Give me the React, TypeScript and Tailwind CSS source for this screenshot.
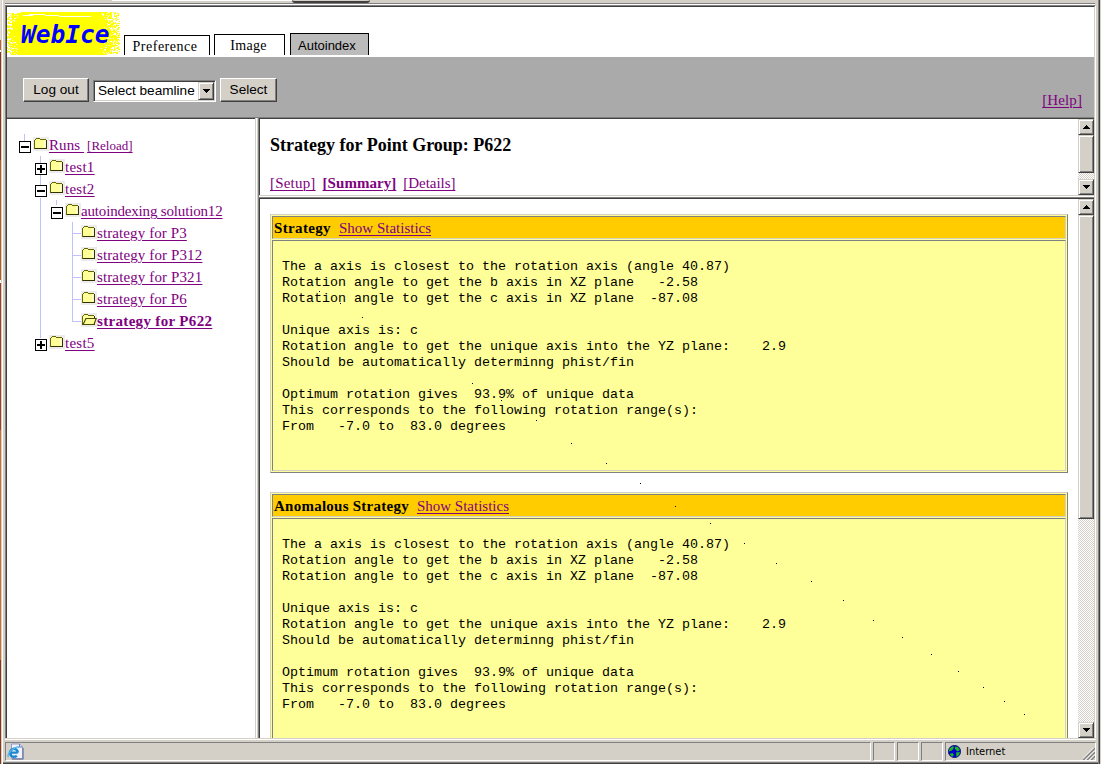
import React from 'react';

const SERIF = "font-['Liberation_Serif',serif]";
const LINK = 'whitespace-pre text-[#800080] underline decoration-1 underline-offset-2';

function Folder({ open = false }: { open?: boolean }) {
  return (
    <svg width="16" height="14" viewBox="0 0 16 14" shapeRendering="crispEdges" className="block shrink-0">
      <rect width="16" height="14" fill="#ececec" />
      <path d="M1 3h1V2h1V1h4v1h6v1h1v9H1z" fill="#666600" />
      <path d="M2 3h1V2h4v1h6v8H2z" fill="#ffff99" />
      {!open && <path d="M11 4h1v7h-1z" fill="#fff" />}
      <path d="M13 3h1v9H2v-1h11z" fill="#333300" />
      {open && (
        <g shapeRendering="auto">
          <path d="M2 11.5L5 5.5h10.2L13 11.5z" fill="#ffff99" stroke="#4d4d00" strokeWidth="1.2" />
        </g>
      )}
    </svg>
  );
}

function Toggle({ open }: { open: boolean }) {
  return (
    <svg width="12" height="12" viewBox="0 0 12 12" shapeRendering="crispEdges" className="mt-[7px] block shrink-0">
      <rect width="12" height="12" fill="#000" />
      <rect x="1" y="1" width="10" height="10" fill="#fff" />
      <rect x="2" y="5" width="8" height="2" fill="#000" />
      {!open && <rect x="5" y="2" width="2" height="8" fill="#000" />}
    </svg>
  );
}

function Guides() {
  return (
    <svg width="90" height="220" viewBox="0 0 90 220" shapeRendering="crispEdges" className="absolute left-0 top-0">
      <path
        d="M17.5 0v7M33.5 22v7M33.5 41v10M33.5 64v140M49.5 66v5M65.5 88v100M65 99.5h9M65 121.5h9M65 143.5h9M65 165.5h9M65 187.5h9"
        stroke="#c0c0ff"
        fill="none"
      />
    </svg>
  );
}

type Node = { label: string; pad: string; toggle?: 'open' | 'closed'; tracking: string; bold?: boolean; extra?: string };

const NODES: Node[] = [
  { label: 'Runs ', pad: 'pl-3', toggle: 'open', tracking: 'tracking-[0.1px]', extra: '[Reload]' },
  { label: 'test1', pad: 'pl-7', toggle: 'closed', tracking: 'tracking-[0.25px]' },
  { label: 'test2', pad: 'pl-7', toggle: 'open', tracking: 'tracking-[0.25px]' },
  { label: 'autoindexing solution12', pad: 'pl-11', toggle: 'open', tracking: 'tracking-[-0.17px]' },
  { label: 'strategy for P3', pad: 'pl-[74px]', tracking: 'tracking-[0.1px]' },
  { label: 'strategy for P312', pad: 'pl-[74px]', tracking: 'tracking-[0.12px]' },
  { label: 'strategy for P321', pad: 'pl-[74px]', tracking: 'tracking-[0.12px]' },
  { label: 'strategy for P6', pad: 'pl-[74px]', tracking: 'tracking-[0.1px]' },
  { label: 'strategy for P622', pad: 'pl-[74px]', tracking: 'tracking-[0.33px]', bold: true },
  { label: 'test5', pad: 'pl-7', toggle: 'closed', tracking: 'tracking-[0.25px]' },
];

function Tree() {
  return (
    <div className="relative mt-[15px]">
      <Guides />
      {NODES.map((n) => (
        <div key={n.label} className={`relative flex h-[22px] items-start ${n.pad}`}>
          {n.toggle && (
            <span className="mr-[2px]">
              <Toggle open={n.toggle === 'open'} />
            </span>
          )}
          <span className="mt-[3px]">
            <Folder open={n.bold} />
          </span>
          <a className={`${LINK} text-[15px] leading-[22px] ${n.tracking} ${n.bold ? 'font-bold' : ''}`}>{n.label}</a>
          {n.extra && <a className={`${LINK} ml-[3px] text-[13px] leading-[23px]`}>{n.extra}</a>}
        </div>
      ))}
    </div>
  );
}

const BEVEL =
  'border border-t-[#d4d0c8] border-l-[#d4d0c8] border-b-[#404040] border-r-[#404040] bg-[#d4d0c8] shadow-[inset_1px_1px_#fff,inset_-1px_-1px_#808080]';

function Arrow({ up = false }: { up?: boolean }) {
  return (
    <div className={`flex h-4 w-4 shrink-0 items-center justify-center ${BEVEL}`}>
      <svg width="7" height="4" viewBox="0 0 7 4" shapeRendering="crispEdges">
        <path d={up ? 'M3 0h1v1h1v1h1v1h1v1H0V3h1V2h1V1h1z' : 'M0 0h7v1H6v1H5v1H4v1H3V3H2V2H1V1H0z'} fill="#000" />
      </svg>
    </div>
  );
}

function Scrollbar({ thumb }: { thumb: string }) {
  return (
    <div className="flex w-4 shrink-0 flex-col bg-[repeating-conic-gradient(#d4d0c8_0_25%,#fff_0_50%)] bg-[length:2px_2px]">
      <Arrow up />
      <div className={`${thumb} ${BEVEL}`} />
      <div className="grow" />
      <Arrow />
    </div>
  );
}

const REPORT = `The a axis is closest to the rotation axis (angle 40.87)
Rotation angle to get the b axis in XZ plane   -2.58
Rotation angle to get the c axis in XZ plane  -87.08

Unique axis is: c
Rotation angle to get the unique axis into the YZ plane:    2.9
Should be automatically determinng phist/fin

Optimum rotation gives  93.9% of unique data
This corresponds to the following rotation range(s):
From   -7.0 to  83.0 degrees`;

const INSET = 'border border-t-[#808080] border-l-[#808080] border-b-[#d4d0c8] border-r-[#d4d0c8]';

function Card({ title, tracking }: { title: string; tracking: string }) {
  return (
    <section className="mb-[19px] flex h-[259px] w-[798px] shrink-0 flex-col gap-px border border-b-[#808080] border-l-[#d4d0c8] border-r-[#808080] border-t-[#d4d0c8] bg-[#ffff99] p-px">
      <div className={`flex h-[23px] shrink-0 items-center bg-[#ffcc00] pl-px pt-[2px] text-[15px] leading-[21px] ${INSET}`}>
        <b className={tracking}>{title}</b>
        <a className={`${LINK} ml-2`}>Show Statistics</a>
      </div>
      <div className={`grow pl-[9px] pt-[18px] ${INSET}`}>
        <pre className="font-['Liberation_Mono',monospace] text-[13.33px] leading-4 text-black">{REPORT}</pre>
      </div>
    </section>
  );
}

const DOTS: [number, number][] = [
  [319, 291], [340, 303], [362, 317], [472, 383], [501, 400], [536, 420], [571, 443], [606, 463], [640, 483],
  [675, 506], [710, 523], [744, 543], [776, 563], [811, 581], [843, 600], [873, 620], [902, 637], [931, 654],
  [958, 671], [983, 687], [1004, 701], [1024, 714],
];

function speckles() {
  let seed = 11;
  const rnd = () => {
    seed = (seed * 16807) % 2147483647;
    return seed / 2147483647;
  };
  let d = '';
  for (let y = 0; y < 43; y++) {
    for (let x = 0; x < 113; x++) {
      const corner = Math.min(x / 14, (112 - x) / 24) + Math.min(y, 42 - y) / 60;
      if (rnd() < 0.72 - corner * 0.8) d += `M${x} ${y}h1v1h-1z`;
    }
  }
  return d;
}
const SPECKLES = speckles();

function Logo() {
  return (
    <div className="relative mt-[5px] h-[43px] w-[113px] shrink-0 bg-[#ffff00]">
      <svg width="113" height="43" viewBox="0 0 113 43" shapeRendering="crispEdges" className="absolute left-0 top-0">
        <path d={SPECKLES} fill="#fff" />
        <path d="M16 3.5h10M22 2.5h16M38 3.5h14M52 4.5h32M0 0.5h14M100 42.5h13" stroke="#fff" fill="none" />
      </svg>
      <span className="absolute left-[14px] top-[9px] whitespace-nowrap font-['DejaVu_Sans_Mono',monospace] text-[24.5px] font-bold italic leading-[28px] text-[#0000ff]">
        WebIce
      </span>
    </div>
  );
}

function Header() {
  return (
    <header className="flex h-[50px] items-start bg-white">
      <Logo />
      <div className={`flex h-[48px] items-end ${SERIF}`}>
        <div className="ml-1 flex h-5 w-[86px] items-center justify-center border border-b-0 border-black pr-1 pt-[2px] text-[14px] tracking-[0.5px]">
          Preference
        </div>
        <div className="ml-1 flex h-[21px] w-[71px] items-center justify-center border border-b-0 border-black pr-0.5 pt-px text-[14px] tracking-[0.3px]">
          Image
        </div>
        <div className="ml-[5px] flex h-[22px] w-[79px] items-center border border-b-0 border-black bg-[#bbbbbb] pl-[7px] pt-[2px] font-['Liberation_Sans',sans-serif] text-[13px]">
          Autoindex
        </div>
      </div>
    </header>
  );
}

function Toolbar() {
  return (
    <div className="flex h-[60px] items-start bg-[#aaaaaa] pl-4 pt-[21px] text-[13.6px] text-black">
      <div className="flex h-6 w-[66px] items-center justify-center border border-b-[#404040] border-l-white border-r-[#404040] border-t-white bg-[#d4d0c8] shadow-[inset_-1px_-1px_#808080]">
        Log out
      </div>
      <div className="ml-1 mt-[2px] flex h-[22px] w-[123px] items-center border border-b-white border-l-[#808080] border-r-white border-t-[#808080] bg-white pl-1 shadow-[inset_1px_1px_#404040,inset_-1px_-1px_#d4d0c8]">
        <span className="grow whitespace-nowrap pt-px">Select beamline</span>
        <div className={`mr-px flex h-[18px] w-4 items-center justify-center ${BEVEL}`}>
          <svg width="7" height="4" viewBox="0 0 7 4" shapeRendering="crispEdges">
            <path d="M0 0h7v1H6v1H5v1H4v1H3V3H2V2H1V1H0z" />
          </svg>
        </div>
      </div>
      <div className="ml-1 flex h-6 w-[57px] items-center justify-center border border-b-[#404040] border-l-white border-r-[#404040] border-t-white bg-[#d4d0c8] shadow-[inset_-1px_-1px_#808080]">
        Select
      </div>
      <a className={`${LINK} ${SERIF} ml-auto mr-[12px] mt-[11px] text-[15px] leading-[22px] tracking-[0.1px]`}>[Help]</a>
    </div>
  );
}

const PANE = 'border border-b-white border-l-[#808080] border-r-white border-t-[#808080]';

function StatusBar() {
  return (
    <footer className="flex h-[19px] shrink-0 gap-[2px]">
      <div className={`w-[866px] ${PANE}`}>
        <svg width="18" height="17" viewBox="0 0 18 17" className="ml-px">
          <path d="M4.5 1h8l3 3v11.5h-11z" fill="#eef3ff" stroke="#8f9cc8" />
          <path d="M5 16.2h11.2V5" fill="none" stroke="#5a6290" strokeWidth=".8" />
          <path d="M12.5 1v3h3" fill="#cdd6f4" stroke="#6f7db5" />
          <path d="M10.9 9.6A4 4 0 1 0 9.8 12.6M3.4 9.6h7.4" fill="none" stroke="#1c86d0" strokeWidth="2.4" />
          <path d="M1.6 14C0 13 2 8 8.5 4.6c2-1 3.5-.8 3.2.6" fill="none" stroke="#4fb4ea" strokeWidth="1.3" />
        </svg>
      </div>
      <div className={`w-[22px] ${PANE}`} />
      <div className={`w-[22px] ${PANE}`} />
      <div className={`w-[22px] ${PANE}`} />
      <div className={`relative flex w-[151px] items-center pl-0.5 ${PANE}`}>
        <svg width="13" height="13" viewBox="0 0 13 13">
          <circle cx="6.5" cy="6.5" r="6.2" fill="#0000c8" stroke="#000060" strokeWidth=".6" />
          <path d="M1.5 3.5L5 1l1 1.5L4 5.5l-3 1zM7 1.5l3 .5 2 3-2.5 1.5L7 4zM1.5 9l3-1L6 10l-2 2zM8 7.5l4-.5-1 3-2.5 2z" fill="#22b522" />
        </svg>
        <span className="ml-[5px] font-['DejaVu_Sans_Condensed','DejaVu_Sans',sans-serif] text-[11px] leading-4 text-black">Internet</span>
        <svg width="12" height="12" viewBox="0 0 12 12" className="absolute bottom-0 right-0">
          <path d="M0 12L12 0M4 12l8-8M8 12l4-4" stroke="#808080" strokeWidth="1.6" />
          <path d="M-1.5 12L12-1.5M2.5 12L12 2.5M6.5 12L12 6.5" stroke="#fff" />
        </svg>
      </div>
    </footer>
  );
}

export default function App() {
  return (
    <div className="flex h-[764px] w-[1101px] overflow-hidden bg-[#d4d0c8] font-['Liberation_Sans',sans-serif] text-black">
      <div className="w-px shrink-0 bg-[linear-gradient(#e8dcd8_0_40px,#c06030_40px_50px,#fff_50px_52px,#8a3410_52px_160px,#b85a20_160px_280px,#fff_280px_283px,#a0401a_283px_430px,#c87030_430px_660px,#8a3410_660px)]" />
      <div className="w-px shrink-0 bg-[#d4d0c8]" />
      <div className="w-px shrink-0 bg-white" />
      <div className="flex w-[1095px] shrink-0 flex-col pl-[2px]">
        <div className="flex h-[3px] shrink-0">
          <div className="ml-[107px] h-px w-[180px] bg-white" />
          <div className="h-[3px] w-[78px] rounded-b-sm border-b-2 border-[#404040]" />
        </div>
        <div className="mr-[3px] h-px shrink-0 bg-[#808080]" />
        <div className="mr-[3px] h-px shrink-0 bg-white" />
        <main className="mr-[2px] flex h-[733px] shrink-0 flex-col border-l border-r border-t border-[#808080] border-r-white">
          <div className="flex h-[732px] flex-col border-l border-r border-t border-[#404040] border-r-[#d4d0c8] bg-white">
            <div className="w-[1087px]">
              <Header />
              <Toolbar />
              <div className="h-px bg-[#808080]" />
            </div>
            <div className={`flex h-[620px] w-[1087px] ${SERIF}`}>
              <aside className="w-[248px] shrink-0 border-t border-[#404040]">
                <Tree />
              </aside>
              <div className="w-px bg-[#d4d0c8]" />
              <div className="w-px bg-white" />
              <div className="w-px bg-[#d4d0c8]" />
              <div className="flex w-[836px] shrink-0 flex-col border-l border-[#808080]">
                <div className="flex h-[77px] shrink-0 border-l border-t border-[#404040]">
                  <div className="grow pl-[10px]">
                    <h1 className="mt-[15px] text-[18px] font-bold leading-[22px]">Strategy for Point Group: P622</h1>
                    <nav className="mt-[16px] flex gap-[7px] text-[15px] leading-[22px]">
                      <a className={`${LINK} tracking-[0.2px]`}>[Setup]</a>
                      <a className={`${LINK} font-bold tracking-[0.05px]`}>[Summary]</a>
                      <a className={`${LINK} tracking-[-0.05px]`}>[Details]</a>
                    </nav>
                  </div>
                  <Scrollbar thumb="h-[38px]" />
                </div>
                <div className="h-px shrink-0 bg-[#d4d0c8]" />
                <div className="h-px shrink-0 bg-white" />
                <div className="h-px shrink-0 bg-[#808080]" />
                <div className="flex h-[540px] shrink-0 border-l border-t border-[#404040]">
                  <div className="relative h-[539px] grow overflow-hidden pl-[10px] pt-[15px]">
                    <Card title="Strategy" tracking="tracking-[0.35px]" />
                    <Card title="Anomalous Strategy" tracking="tracking-[0.25px]" />
                    <svg
                      width="817"
                      height="539"
                      viewBox="260 199 817 539"
                      shapeRendering="crispEdges"
                      className="pointer-events-none absolute left-0 top-0"
                    >
                      {DOTS.map(([x, y]) => (
                        <rect key={x} x={x} y={y} width="1" height="1" fill="#000033" />
                      ))}
                    </svg>
                  </div>
                  <Scrollbar thumb="h-[304px]" />
                </div>
              </div>
            </div>
          </div>
        </main>
        <div className="h-px shrink-0 bg-[#d4d0c8]" />
        <div className="mr-[2px] h-px shrink-0 bg-white" />
        <div className="h-[2px] shrink-0" />
        <StatusBar />
        <div className="h-px shrink-0" />
        <div className="-ml-[2px] h-px shrink-0 bg-[#808080]" />
        <div className="-ml-[2px] h-px shrink-0 bg-[#404040]" />
      </div>
      <div className="w-px bg-[#808080]" />
      <div className="w-px bg-[#404040]" />
    </div>
  );
}
